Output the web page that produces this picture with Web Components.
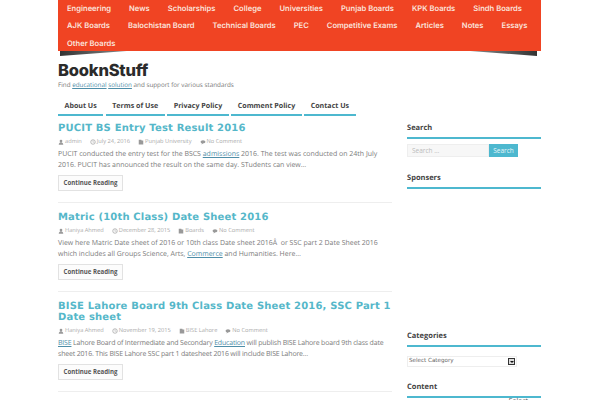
<!DOCTYPE html>
<html>
<head>
<meta charset="utf-8">
<style>
  html, body { margin: 0; height: 400px; overflow: hidden; background: #fff; }
  html { text-rendering: geometricPrecision; }
  body { font-family: "Open Sans", sans-serif; color: #777; }
  #page { width: 483px; margin-left: 58px; }
  #columns { display: grid; grid-template-columns: 334px 134px; column-gap: 15px; }
</style>
</head>
<body>
<div id="page">
  <top-menu>
    <a>Engineering</a><a>News</a><a>Scholarships</a><a>College</a><a>Universities</a><a>Punjab Boards</a><a>KPK Boards</a><a>Sindh Boards</a>
    <a>AJK Boards</a><a>Balochistan Board</a><a>Technical Boards</a><a>PEC</a><a>Competitive Exams</a><a>Articles</a><a>Notes</a><a>Essays</a>
    <a>Other Boards</a>
  </top-menu>
  <site-brand name="BooknStuff">Find <u>educational</u> <u>solution</u> and support for various standards</site-brand>
  <page-tabs>
    <a>About Us</a><a>Terms of Use</a><a>Privacy Policy</a><a>Comment Policy</a><a>Contact Us</a>
  </page-tabs>
  <div id="columns">
    <main>
      <post-card heading="PUCIT BS Entry Test Result 2016" author="admin" date="July 24, 2016" cat="Punjab University">PUCIT conducted the entry test for the BSCS <u>admissions</u> 2016. The test was conducted on 24th July 2016. PUCIT has announced the result on the same day. STudents can view…</post-card>
      <post-card heading="Matric (10th Class) Date Sheet 2016" author="Haniya Ahmed" date="December 28, 2015" cat="Boards">View here Matric Date sheet of 2016 or 10th class Date sheet 2016Â&nbsp; or SSC part 2 Date Sheet 2016 which includes all Groups Science, Arts, <u>Commerce</u> and Humanities. Here…</post-card>
      <post-card style="--copy-spacing:-.17px" heading="BISE Lahore Board 9th Class Date Sheet 2016, SSC Part 1 Date sheet" author="Haniya Ahmed" date="November 19, 2015" cat="BISE Lahore"><u>BISE</u> Lahore Board of Intermediate and Secondary <u>Education</u> will publish BISE Lahore board 9th class date sheet 2016. This BISE Lahore SSC part 1 datesheet 2016 will include BISE Lahore…</post-card>
    </main>
    <aside>
      <side-widget heading="Search" space="16"><search-box></search-box></side-widget>
      <side-widget heading="Sponsers" space="142"></side-widget>
      <side-widget heading="Categories" space="15"><category-select></category-select></side-widget>
      <side-widget heading="Content" space="0"><div style="margin-top:-6px;text-align:right;font:7px/9px 'Open Sans',sans-serif;color:#555;padding-right:13px">Select</div></side-widget>
    </aside>
  </div>
</div>

<script>
class TopMenu extends HTMLElement {
  constructor() {
    super();
    this.attachShadow({ mode: "open" });
    this.shadowRoot.innerHTML = `
      <style>
        :host { display: block; position: relative; }
        nav {
          position: relative;
          z-index: 1;
          display: flex;
          flex-wrap: wrap;
          align-content: flex-start;
          column-gap: 18px;
          height: 51px;
          padding: 0 9px;
          box-sizing: border-box;
          background: #f04423;
        }
        ::slotted(a) {
          font: 600 7.600px/17.300px "Inter", sans-serif;
          color: #fbe3dc;
        }
        .shade {
          position: absolute;
          bottom: -5px;
          height: 6px;
          width: 80px;
          filter: blur(.6px);
        }
        .left { left: 2px; background: linear-gradient(90deg, #333, #999); clip-path: polygon(0 0, 100% 0, 0 100%); }
        .right { right: 4px; background: linear-gradient(270deg, #333, #999); clip-path: polygon(0 0, 100% 0, 100% 100%); }
      </style>
      <div class="shade left"></div>
      <div class="shade right"></div>
      <nav><slot></slot></nav>
    `;
  }
}

class SiteBrand extends HTMLElement {
  constructor() {
    super();
    this.attachShadow({ mode: "open" });
    this.shadowRoot.innerHTML = `
      <style>
        :host { display: block; padding-top: 9px; height: 37px; }
        h1 {
          margin: 0;
          font: 800 16.500px/20px "Inter", sans-serif;
          letter-spacing: -.2px;
          color: #2b2b2b;
        }
        p { margin: 0; font: 6.300px/10px "Open Sans", sans-serif; color: #777; }
        ::slotted(u) { color: #4f8ea8; }
      </style>
      <h1>${this.getAttribute("name")}</h1>
      <p><slot></slot></p>
    `;
  }
}

class PageTabs extends HTMLElement {
  constructor() {
    super();
    this.attachShadow({ mode: "open" });
    this.shadowRoot.innerHTML = `
      <style>
        :host { display: flex; column-gap: 2.500px; height: 25px; padding-top: 1px; }
        ::slotted(a) {
          display: block;
          padding: 0 6.500px;
          height: 16px;
          font: 700 7.100px/17px "Open Sans", sans-serif;
          color: #444;
          border-bottom: 2px solid #4db8cf;
        }
      </style>
      <slot></slot>
    `;
  }
}

const metaIcons = {
  user: '<path d="M4 1a1.600 1.600 0 1 1 0 3.600A1.600 1.600 0 0 1 4 1zM1 7.500c0-2 1.200-2.800 3-2.800s3 .8 3 2.800z"/>',
  clock: '<circle cx="4" cy="4" r="3" fill="none" stroke="#999" stroke-width=".9"/><path d="M3.700 2h.7v2.200H6v.6H3.700z"/>',
  folder: '<path d="M1 1h3.400l.4 1H7v5.200H1z"/>',
  comment: '<path d="M4 1.500c1.800 0 3.200 1 3.200 2.200S5.800 6 4 6l-2 1.200.5-1.500C1.500 5.300.8 4.600.8 3.700.8 2.500 2.200 1.500 4 1.500z"/>',
};

class PostCard extends HTMLElement {
  constructor() {
    super();
    this.attachShadow({ mode: "open" });
    const icon = (name) => `<svg width="6" height="6" viewBox="0 0 8 8" fill="#999">${metaIcons[name]}</svg>`;
    this.shadowRoot.innerHTML = `
      <style>
        :host { display: block; border-bottom: 1px solid #eee; padding-bottom: 11px; margin-bottom: 9px; }
        h2 {
          margin: 0 0 3px;
          font: 700 10px/11px "DejaVu Sans", sans-serif;
          letter-spacing: .17px;
          color: #55b7c9;
        }
        .meta { display: flex; column-gap: 8px; height: 9px; font: 5.700px/9px "Open Sans", sans-serif; color: #aaa; }
        .meta span { display: flex; align-items: center; column-gap: 1px; }
        p {
          margin: 4px 0;
          font: 6.980px/10.500px "Open Sans", sans-serif;
          letter-spacing: var(--copy-spacing, 0);
          color: #7a7a7a;
        }
        ::slotted(u) { color: #4f8ea8; }
        button {
          display: block;
          width: 65px;
          height: 16px;
          padding: 0;
          font: 700 6.100px/14px "Open Sans", sans-serif;
          color: #555;
          background: #fcfcfc;
          border: 1px solid #e2e2e2;
        }
      </style>
      <h2>${this.getAttribute("heading")}</h2>
      <div class="meta">
        <span>${icon("user")}${this.getAttribute("author")}</span>
        <span>${icon("clock")}${this.getAttribute("date")}</span>
        <span>${icon("folder")}${this.getAttribute("cat")}</span>
        <span>${icon("comment")}No Comment</span>
      </div>
      <p><slot></slot></p>
      <button>Continue Reading</button>
    `;
  }
}

class SideWidget extends HTMLElement {
  constructor() {
    super();
    this.attachShadow({ mode: "open" });
    this.shadowRoot.innerHTML = `
      <style>
        :host { display: block; margin-bottom: ${this.getAttribute("space")}px; }
        h3 {
          margin: 0 0 5px;
          padding-bottom: 4px;
          font: 700 7.500px/10px "Open Sans", sans-serif;
          color: #444;
          border-bottom: 2px solid #4db8cf;
        }
      </style>
      <h3>${this.getAttribute("heading")}</h3>
      <slot></slot>
    `;
  }
}

class SearchBox extends HTMLElement {
  constructor() {
    super();
    this.attachShadow({ mode: "open" });
    this.shadowRoot.innerHTML = `
      <style>
        :host { display: flex; height: 13px; }
        input {
          width: 82px;
          padding: 0 4px;
          border: 1px solid #eee;
          background: #f7f7f7;
          font: 6.500px "Open Sans", sans-serif;
          box-sizing: border-box;
        }
        input::placeholder { color: #bbb; }
        button {
          width: 29px;
          padding: 0;
          border: 0;
          background: #4db8cf;
          color: #e8f6f9;
          font: 6.500px "Open Sans", sans-serif;
        }
      </style>
      <input placeholder="Search …"><button>Search</button>
    `;
  }
}

class CategorySelect extends HTMLElement {
  constructor() {
    super();
    this.attachShadow({ mode: "open" });
    this.shadowRoot.innerHTML = `
      <style>
        :host {
          display: flex;
          align-items: center;
          justify-content: space-between;
          width: 106px;
          height: 9px;
          margin-top: 9px;
          padding: 0 1px;
          border: 1px solid #eee;
          font: 5.600px/9px "DejaVu Sans", sans-serif;
          color: #666;
        }
        i {
          width: 7px;
          height: 7px;
          background: #ddd;
          border: 1px solid #333;
          box-sizing: border-box;
          display: flex;
          align-items: center;
          justify-content: center;
        }
        i::after {
          content: "";
          border: 2px solid transparent;
          border-top-color: #111;
          margin-top: 2px;
        }
      </style>
      <span>Select Category</span><i></i>
    `;
  }
}

customElements.define("top-menu", TopMenu);
customElements.define("site-brand", SiteBrand);
customElements.define("page-tabs", PageTabs);
customElements.define("post-card", PostCard);
customElements.define("side-widget", SideWidget);
customElements.define("search-box", SearchBox);
customElements.define("category-select", CategorySelect);
</script>
</body>
</html>
